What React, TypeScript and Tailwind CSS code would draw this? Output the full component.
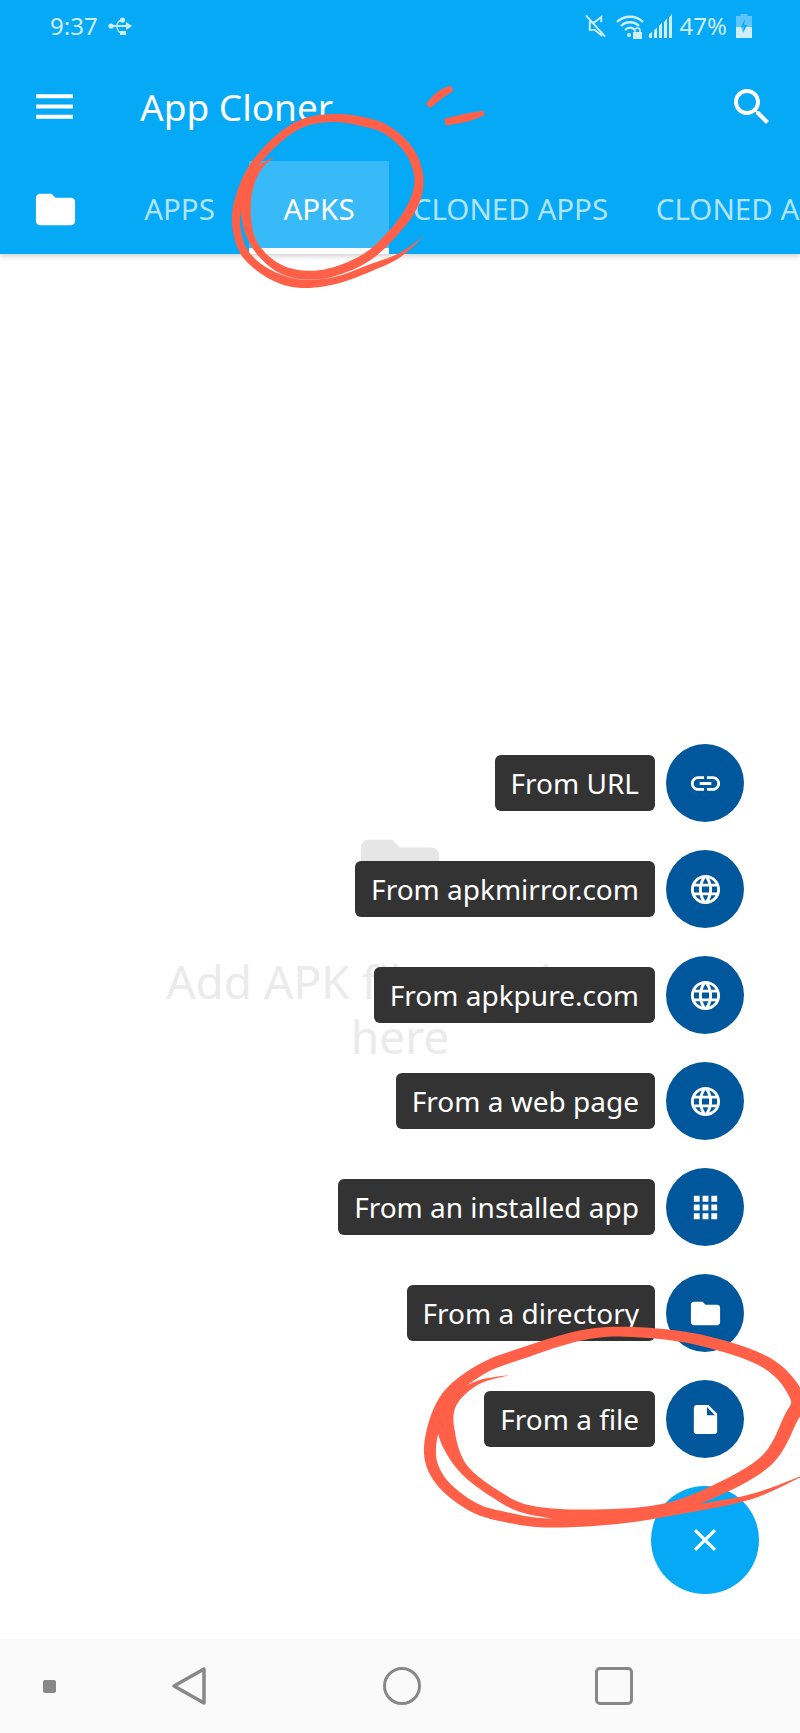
import type { ReactNode } from "react";

const FONT = "font-['Noto_Sans',sans-serif]";

const ICONS = {
  menu: "M3 18h18v-2H3v2zm0-5h18v-2H3v2zm0-7v2h18V6H3z",
  search:
    "M15.5 14h-.79l-.28-.27C15.41 12.59 16 11.11 16 9.5 16 5.91 13.09 3 9.5 3S3 5.91 3 9.5 5.91 16 9.5 16c1.61 0 3.09-.59 4.23-1.57l.27.28v.79l5 4.99L20.49 19l-4.99-5zm-6 0C7.01 14 5 11.99 5 9.5S7.01 5 9.5 5 14 7.01 14 9.5 11.99 14 9.5 14z",
  folder:
    "M10 4H4c-1.1 0-1.99.9-1.99 2L2 18c0 1.1.9 2 2 2h16c1.1 0 2-.9 2-2V8c0-1.1-.9-2-2-2h-8l-2-2z",
  link: "M3.9 12c0-1.71 1.39-3.1 3.1-3.1h4V7H7c-2.76 0-5 2.24-5 5s2.24 5 5 5h4v-1.9H7c-1.71 0-3.1-1.39-3.1-3.1zM8 13h8v-2H8v2zm9-6h-4v1.9h4c1.71 0 3.1 1.39 3.1 3.1s-1.39 3.1-3.1 3.1h-4V17h4c2.76 0 5-2.24 5-5s-2.24-5-5-5z",
  globe:
    "M11.99 2C6.47 2 2 6.48 2 12s4.47 10 9.99 10C17.52 22 22 17.52 22 12S17.52 2 11.99 2zm6.93 6h-2.95c-.32-1.25-.78-2.45-1.38-3.56 1.84.63 3.37 1.91 4.33 3.56zM12 4.04c.83 1.2 1.48 2.53 1.91 3.96h-3.82c.43-1.43 1.08-2.76 1.91-3.96zM4.26 14C4.1 13.36 4 12.69 4 12s.1-1.36.26-2h3.38c-.08.66-.14 1.32-.14 2 0 .68.06 1.34.14 2H4.26zm.82 2h2.95c.32 1.25.78 2.45 1.38 3.56-1.84-.63-3.37-1.9-4.33-3.56zm2.95-8H5.08c.96-1.66 2.49-2.93 4.33-3.56C8.81 5.55 8.35 6.75 8.03 8zM12 19.96c-.83-1.2-1.48-2.53-1.91-3.96h3.82c-.43 1.43-1.08 2.76-1.91 3.96zM14.34 14H9.66c-.09-.66-.16-1.32-.16-2 0-.68.07-1.35.16-2h4.68c.09.65.16 1.32.16 2 0 .68-.07 1.34-.16 2zm.25 5.56c.6-1.11 1.06-2.31 1.38-3.56h2.95c-.96 1.65-2.49 2.93-4.33 3.56zM16.36 14c.08-.66.14-1.32.14-2 0-.68-.06-1.34-.14-2h3.38c.16.64.26 1.31.26 2s-.1 1.36-.26 2h-3.38z",
  apps: "M4 8h4V4H4v4zm6 12h4v-4h-4v4zm-6 0h4v-4H4v4zm0-6h4v-4H4v4zm6 0h4v-4h-4v4zm6-10v4h4V4h-4zm-6 4h4V4h-4v4zm6 6h4v-4h-4v4zm0 6h4v-4h-4v4z",
  file: "M6 2c-1.1 0-1.99.9-1.99 2L4 20c0 1.1.89 2 1.99 2H18c1.1 0 2-.9 2-2V8l-6-6H6zm7 7V3.5L18.5 9H13z",
  close:
    "M19 6.41L17.59 5 12 10.59 6.41 5 5 6.41 10.59 12 5 17.59 6.41 19 12 13.41 17.59 19 19 17.59 13.41 12z",
};

const DIAL_ITEMS: { label: string; icon: keyof typeof ICONS }[] = [
  { label: "From URL", icon: "link" },
  { label: "From apkmirror.com", icon: "globe" },
  { label: "From apkpure.com", icon: "globe" },
  { label: "From a web page", icon: "globe" },
  { label: "From an installed app", icon: "apps" },
  { label: "From a directory", icon: "folder" },
  { label: "From a file", icon: "file" },
];

// marker strokes: x, y, stroke width at that point
type BrushPoint = [number, number, number];

const TICK_TOP: BrushPoint[] = [[428, 106, 6], [440, 95, 8], [452, 88, 6]];
const TICK_BOTTOM: BrushPoint[] = [[445, 122, 7], [465, 118, 8], [484, 113, 5]];

const RING_APKS: BrushPoint[] = [
  [275, 156, 0], [258, 170, 5], [247, 193, 10], [247, 223, 9], [256, 247, 7], [277, 267, 8],
  [303, 275, 9], [333, 272, 9], [367, 257, 9], [393, 233, 9], [412, 207, 10], [419, 180, 9],
  [410, 152, 9], [387, 130, 9], [360, 121, 9], [332, 118, 8], [303, 123, 8], [277, 140, 8],
  [253, 167, 8], [240, 197, 9], [236, 223, 8], [243, 250, 8], [260, 268, 8], [283, 280, 9],
  [307, 284, 8], [337, 280, 7], [370, 268, 7], [400, 255, 4], [425, 235, 0],
];

const RING_FILE: BrushPoint[] = [
  [510, 1375, 0], [477, 1383, 4], [452, 1403, 10], [446, 1430, 17], [462, 1467, 10], [497, 1495, 9],
  [530, 1510, 9], [587, 1515, 11], [660, 1510, 11], [717, 1490, 12], [767, 1460, 13], [790, 1420, 14],
  [797, 1397, 14], [767, 1363, 12], [700, 1340, 11], [633, 1332, 10], [583, 1335, 10], [523, 1353, 11],
  [480, 1370, 11], [445, 1400, 12], [430, 1447, 12], [440, 1480, 11], [473, 1507, 10], [510, 1518, 10],
  [550, 1523, 9], [617, 1520, 8], [683, 1510, 7], [750, 1497, 5], [800, 1477, 1],
];

// Catmull-Rom through the points, then offset both sides to get a filled ribbon
const brushPath = (pts: BrushPoint[]) => {
  const samples: BrushPoint[] = [];
  for (let i = 0; i < pts.length - 1; i++) {
    const p0 = pts[Math.max(i - 1, 0)];
    const p1 = pts[i];
    const p2 = pts[i + 1];
    const p3 = pts[Math.min(i + 2, pts.length - 1)];
    for (let s = 0; s < 8; s++) {
      const t = s / 8;
      const at = (k: number) =>
        0.5 *
        (2 * p1[k] +
          (p2[k] - p0[k]) * t +
          (2 * p0[k] - 5 * p1[k] + 4 * p2[k] - p3[k]) * t * t +
          (3 * p1[k] - p0[k] - 3 * p2[k] + p3[k]) * t * t * t);
      samples.push([at(0), at(1), at(2)]);
    }
  }
  samples.push(pts[pts.length - 1]);

  const left: string[] = [];
  const right: string[] = [];
  samples.forEach((p, i) => {
    const a = samples[Math.max(i - 1, 0)];
    const b = samples[Math.min(i + 1, samples.length - 1)];
    const len = Math.hypot(b[0] - a[0], b[1] - a[1]) || 1;
    const nx = (-(b[1] - a[1]) / len) * (p[2] / 2);
    const ny = ((b[0] - a[0]) / len) * (p[2] / 2);
    left.push(`${(p[0] + nx).toFixed(1)} ${(p[1] + ny).toFixed(1)}`);
    right.unshift(`${(p[0] - nx).toFixed(1)} ${(p[1] - ny).toFixed(1)}`);
  });
  return `M${left.join("L")}L${right.join("L")}Z`;
};

const Icon = ({ name, className }: { name: keyof typeof ICONS; className: string }) => (
  <svg viewBox="0 0 24 24" fill="currentColor" className={className}>
    <path d={ICONS[name]} />
  </svg>
);

const Tab = ({ width, active, children }: { width: string; active?: boolean; children: ReactNode }) => (
  <div
    className={`${width} shrink-0 h-full pt-[9px] flex items-center justify-center border-b-[6px] ${
      active ? "bg-white/20 border-white text-white" : "border-transparent text-white/70"
    }`}
  >
    {children}
  </div>
);

const StatusBar = () => (
  <div className="h-[52px] shrink-0 pl-[50px] pr-[48px] flex items-center justify-between text-[#cfeefd]">
    <div className="flex items-center gap-[10px]">
      <span className="text-[24px] leading-none">9:37</span>
      <svg width="24" height="18" viewBox="0 0 24 18" fill="currentColor">
        <circle cx="3" cy="9" r="2.6" />
        <path d="M3 8h15V5l6 4-6 4v-3H3z" />
        <circle cx="14.5" cy="3" r="2.6" />
        <path d="M12 14h6v4h-6z" />
        <path d="M7 9c2 0 2-6 5-6h2v1.4h-2C10 4.400 10 10 7 10zM7 9c2 0 2 7 5 7h2v-1.400h-2C10 14.600 10 8 7 8z" />
      </svg>
    </div>
    <div className="flex items-center">
      {/* mute */}
      <svg width="23" height="24" viewBox="0 0 24 24" fill="none" stroke="currentColor" strokeWidth="2">
        <path d="M2 1l20 22M18 8V2.500L11 8H6v8h5l7 5.500v-4" />
      </svg>
      {/* wifi + lock */}
      <svg width="28" height="26" viewBox="0 0 28 26" fill="none" stroke="currentColor" strokeWidth="2.400" className="ml-[9px]">
        <path d="M1 9c7-7 19-7 26 0M5 13c5-5 13-5 18 0M9 17c3-3 7-3 10 0" />
        <circle cx="13" cy="22" r="2" fill="currentColor" stroke="none" />
        <path d="M17 19h9v7h-9z" fill="currentColor" stroke="none" />
        <path d="M19 19v-1.500a2.500 2.500 0 0 1 5 0V19" strokeWidth="1.500" />
      </svg>
      {/* signal */}
      <svg width="24" height="24" viewBox="0 0 24 24" fill="currentColor" className="ml-[5px]">
        <path d="M0 20l3-2v6H0zM5 16.500l3-3V24H5zM10 12l3-3.500V24h-3zM15 8l3-3.500V24h-3zM20 3.500L23 0v24h-3z" />
      </svg>
      <span className="text-[24px] leading-none ml-[7px]">47%</span>
      {/* battery */}
      <svg width="16" height="24" viewBox="0 0 16 24" className="ml-[9px]">
        <path d="M4.500 0h7v2H16v22H0V2h4.500z" fill="#5cc6f8" />
        <path d="M0 13h5l2 6 2-6h7v11H0z" fill="currentColor" />
        <path d="M9 5L5 13h3l-1 6 4-8H8z" fill="#05a9f6" />
      </svg>
    </div>
  </div>
);

// hand drawn marker notes on top of the screenshot
const Scribbles = () => (
  <svg className="absolute inset-0 z-20 pointer-events-none" width="800" height="1733" viewBox="0 0 800 1733" fill="#ff6047">
    {[TICK_TOP, TICK_BOTTOM, RING_APKS, RING_FILE].map((stroke, i) => (
      <path key={i} d={brushPath(stroke)} />
    ))}
  </svg>
);

const App = () => {
  return (
    <div className={`relative w-[800px] h-[1733px] flex flex-col overflow-hidden bg-white ${FONT}`}>
      <header className="relative z-10 h-[254px] shrink-0 flex flex-col bg-[#05a9f6] shadow-[0_2px_6px_rgba(0,0,0,0.2)]">
        <StatusBar />

        <div className="h-[109px] shrink-0 flex items-center pl-[30px] pr-[24px] text-white">
          <Icon name="menu" className="w-[49px] h-[49px]" />
          <span className="ml-[61px] text-[37px] leading-none">App Cloner</span>
          <Icon name="search" className="w-[48px] h-[48px] ml-auto" />
        </div>

        <div className="flex-1 flex text-[29.5px] overflow-hidden">
          <Tab width="w-[110px]">
            <Icon name="folder" className="w-[47px] h-[47px] text-white" />
          </Tab>
          <Tab width="w-[139px]">APPS</Tab>
          <Tab width="w-[140px]" active>APKS</Tab>
          <Tab width="w-[243px]">CLONED APPS</Tab>
          <Tab width="w-[243px]">CLONED APPS</Tab>
        </div>
      </header>

      <main className="relative flex-1 flex flex-col items-center justify-center pb-[5px]">
        <Icon name="folder" className="w-[94px] h-[94px] text-[#e6e6e6]" />
        <p className="mt-[36px] w-[500px] text-center text-[46px] leading-[55px] text-[#ebebeb]">
          Add APK files to clone here
        </p>

        {/* speed dial */}
        <div className="absolute top-[490px] right-[56px] flex flex-col gap-[28px]">
          {DIAL_ITEMS.map((item) => (
            <div key={item.label} className="flex items-center justify-end gap-[11px]">
              <span className="h-[56px] px-[16px] flex items-center rounded-[6px] bg-[#333333] text-[28px] text-white whitespace-nowrap">
                {item.label}
              </span>
              <span className="w-[78px] h-[78px] rounded-full bg-[#01579b] flex items-center justify-center text-white">
                <Icon name={item.icon} className="w-[35px] h-[35px]" />
              </span>
            </div>
          ))}
        </div>

        <div className="absolute right-[41px] bottom-[45px] w-[108px] h-[108px] rounded-full bg-[#05a9f6] flex items-center justify-center text-white">
          <Icon name="close" className="w-[38px] h-[38px]" />
        </div>
      </main>

      <nav className="relative h-[94px] shrink-0 bg-[#fafafa] text-[#888888]">
        <div className="h-full flex items-center">
          <span className="ml-[43px] w-[13px] h-[13px] rounded-[2px] bg-[#888888]" />
          <svg width="36" height="40" viewBox="0 0 36 40" fill="none" stroke="currentColor" strokeWidth="3.500" strokeLinejoin="round" className="ml-[115px]">
            <path d="M33 3v34L3 20z" />
          </svg>
          <span className="ml-[176px] w-[38px] h-[38px] rounded-full border-[3.5px] border-[#888888]" />
          <span className="ml-[174px] w-[38px] h-[38px] rounded-[5px] border-[3.5px] border-[#888888]" />
        </div>
      </nav>

      <Scribbles />
    </div>
  );
};

export default App;
